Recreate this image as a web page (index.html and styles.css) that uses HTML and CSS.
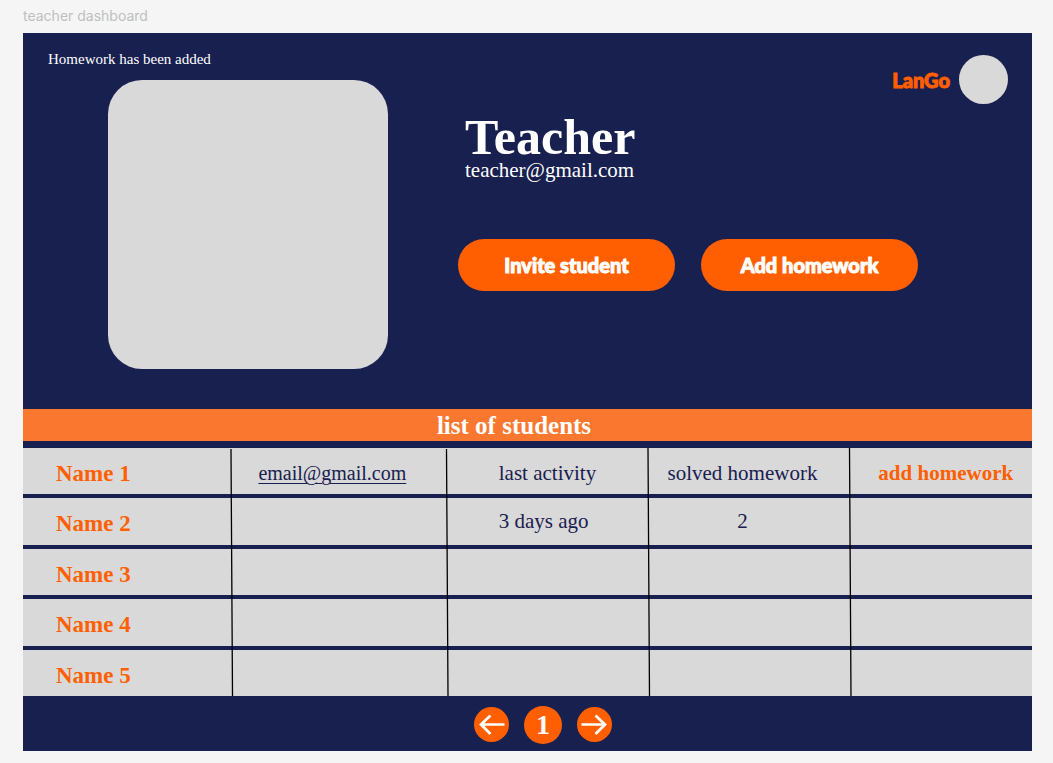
FILE: index.html
```html
<!DOCTYPE html>
<html lang="en">
<head>
<meta charset="utf-8">
<title>teacher dashboard</title>
<meta name="viewport" content="width=device-width, initial-scale=1">
<link rel="stylesheet" href="styles.css">
</head>
<body>
<p class="frame-label">teacher dashboard</p>
<main class="dashboard">
  <header class="hero">
    <p class="notice" role="status">Homework has been added</p>
    <div class="brand">
      <span class="brand-name">LanGo</span>
      <span class="avatar"></span>
    </div>
    <div class="photo"></div>
    <div class="profile">
      <h1 class="profile-name">Teacher</h1>
      <p class="profile-email">teacher@gmail.com</p>
      <div class="actions">
        <button class="action" type="button">Invite student</button>
        <button class="action" type="button">Add homework</button>
      </div>
    </div>
  </header>

  <section class="students" aria-labelledby="students-title">
    <h2 class="students-title" id="students-title">list of students</h2>
    <div class="table-wrap">
      <table class="table">
        <colgroup>
          <col class="col-name"><col class="col-email"><col class="col-activity"><col class="col-solved"><col class="col-add">
        </colgroup>
        <tbody>
          <tr class="first">
            <th class="name" scope="row">Name 1</th>
            <td class="email"><a class="email-link" href="#">email@gmail.com</a></td>
            <td class="activity">last activity</td>
            <td class="solved">solved homework</td>
            <td class="add"><button class="add-button" type="button">add homework</button></td>
          </tr>
          <tr>
            <th class="name" scope="row">Name 2</th>
            <td></td>
            <td class="activity">3 days ago</td>
            <td class="solved">2</td>
            <td></td>
          </tr>
          <tr><th class="name" scope="row">Name 3</th><td></td><td></td><td></td><td></td></tr>
          <tr><th class="name" scope="row">Name 4</th><td></td><td></td><td></td><td></td></tr>
          <tr><th class="name" scope="row">Name 5</th><td></td><td></td><td></td><td></td></tr>
        </tbody>
      </table>
      <svg class="rules" viewBox="0 0 1009 248" preserveAspectRatio="none" aria-hidden="true">
        <path d="M208 1 209.500 248M423.500 1 425 248M625 0 626.500 248M826.500 0 828 248"/>
      </svg>
    </div>
  </section>

  <nav class="pager" aria-label="Pages">
    <button class="page-arrow" type="button" aria-label="Previous page">
      <svg class="arrow" viewBox="0 0 35 35" aria-hidden="true"><path d="M30.500 17.500H7M16.500 8.500 7 17.500 16.500 27"/></svg>
    </button>
    <button class="page-number" type="button" aria-current="page">1</button>
    <button class="page-arrow" type="button" aria-label="Next page">
      <svg class="arrow" viewBox="0 0 35 35" aria-hidden="true"><path d="M4.500 17.500H28M18.500 8.500 28 17.500 18.500 27"/></svg>
    </button>
  </nav>
</main>
</body>
</html>
```
FILE: styles.css
```css
:root {
  --navy: #18204f;
  --orange: #ff5f00;
  --band: #f9772e;
  --grey: #d9d9d9;
  --serif: "Liberation Serif", "Times New Roman", serif;
  --display: Lato, "Liberation Sans", sans-serif;
}

* {
  box-sizing: border-box;
}

body {
  margin: 0;
  padding: 6px 21px 12px 23px;
  background: #f5f5f5;
  font-family: var(--serif);
}

p,
h1,
h2 {
  margin: 0;
}

button {
  border: 0;
  padding: 0;
  cursor: pointer;
}

.frame-label {
  margin-bottom: 7px;
  color: #bfbfbf;
  font: 14px/20px Inter, "Liberation Sans", sans-serif;
}

.dashboard {
  background: var(--navy);
}

.hero {
  display: grid;
  grid-template-columns: 340px 1fr auto;
  grid-template-rows: 30px auto;
  column-gap: 70px;
  padding: 17px 24px 40px 25px;
  color: #fff;
}

.notice {
  grid-column: 1;
  grid-row: 1;
  font-size: 15px;
  line-height: 18px;
}

.brand {
  grid-column: 3;
  grid-row: 1 / 3;
  align-self: start;
  display: flex;
  align-items: center;
  gap: 9px;
  padding-top: 5px;
}

.brand-name {
  color: var(--orange);
  font: 900 20px/24px var(--display);
  -webkit-text-stroke: 1px currentColor;
}

.avatar {
  width: 49px;
  height: 49px;
  border-radius: 50%;
  background: var(--grey);
}

.photo {
  grid-column: 1;
  grid-row: 2;
  height: 289px;
  margin-left: 60px;
  border-radius: 34px;
  background: var(--grey);
}

.profile {
  grid-column: 2 / 4;
  grid-row: 2;
  padding-top: 32px;
}

.profile-name {
  padding-left: 7px;
  font-size: 50px;
  line-height: 50px;
}

.profile-email {
  padding-left: 7px;
  font-size: 21px;
  line-height: 16px;
}

.actions {
  display: flex;
  flex-wrap: wrap;
  gap: 26px;
  margin-top: 61px;
}

.action {
  width: 217px;
  height: 52px;
  border-radius: 26px;
  background: var(--orange);
  color: #fff;
  font: 900 20px/24px var(--display);
  -webkit-text-stroke: 1px currentColor;
}

.students-title {
  padding: 2px 27px 0 0;
  background: var(--band);
  color: #fff;
  font-size: 25px;
  line-height: 30px;
  text-align: center;
}

.table-wrap {
  position: relative;
  margin-top: 7px;
}

.table {
  width: 100%;
  height: 248px;
  table-layout: fixed;
  border-spacing: 0;
  background: var(--grey);
  color: var(--navy);
  font-size: 21px;
  line-height: 24px;
}

.first {
  height: 46px;
}

.col-name { width: 20.7%; }
.col-email { width: 21.3%; }
.col-activity { width: 20%; }
.col-solved { width: 20%; }
.col-add { width: 18%; }

.table th,
.table td {
  padding: 0;
  text-align: left;
  white-space: nowrap;
}

.table tr + tr > * {
  border-top: 4px solid var(--navy);
}

.table .first > td {
  padding-top: 4px;
}

.table .name {
  padding: 6px 0 0 33px;
  color: var(--orange);
  font-size: 23px;
}

.table .email {
  padding-right: 14px;
  font-size: 20px;
  text-align: center;
}

.email-link {
  color: inherit;
  text-decoration-thickness: 1px;
  text-underline-offset: 3px;
}

.table .activity {
  padding-left: 52px;
}

.table .solved {
  padding-right: 14px;
  text-align: center;
}

.table .add {
  padding-left: 28px;
}

.add-button {
  background: none;
  color: var(--orange);
  font: bold 21px/24px var(--serif);
}

.rules {
  position: absolute;
  inset: 0;
  width: 100%;
  height: 100%;
  fill: none;
  stroke: #000;
  stroke-width: 1.3;
  pointer-events: none;
}

.pager {
  display: flex;
  justify-content: center;
  align-items: center;
  gap: 15px;
  height: 55px;
  padding: 2px 0 0 31px;
}

.page-arrow,
.page-number {
  flex: none;
  border-radius: 50%;
  background: var(--orange);
  color: #fff;
}

.page-arrow {
  width: 35px;
  height: 35px;
}

.page-number {
  width: 38px;
  height: 38px;
  font: bold 28px/38px var(--serif);
}

.arrow {
  display: block;
  fill: none;
  stroke: #fff;
  stroke-width: 2.7;
}
```
